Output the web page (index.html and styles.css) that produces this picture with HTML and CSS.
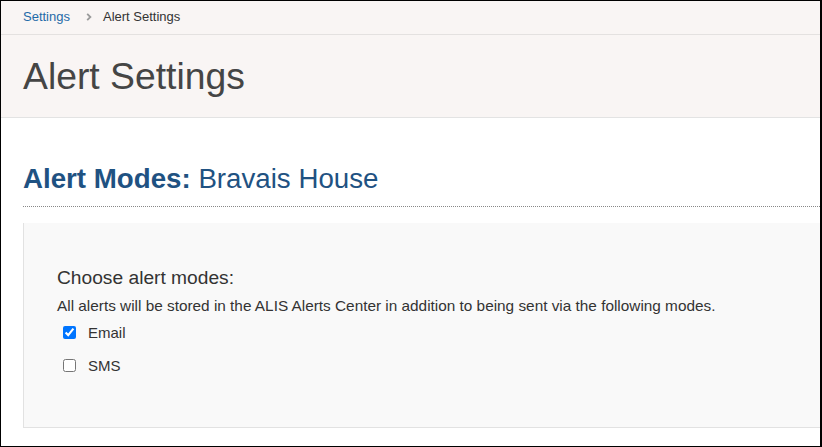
FILE: index.html
```html
<!DOCTYPE html>
<html lang="en">
<head>
<meta charset="utf-8">
<title>Alert Settings</title>
<link rel="stylesheet" href="styles.css">
</head>
<body>
<div class="frame">
  <nav class="crumbs">
    <a class="crumb-link" href="#">Settings</a>
    <svg class="crumb-sep" width="6" height="8" viewBox="0 0 6 8" aria-hidden="true"><path d="M1.2 0.8 L4.4 4 L1.2 7.2" fill="none" stroke="#9a9a9a" stroke-width="1.8"/></svg>
    <span class="crumb-current">Alert Settings</span>
  </nav>
  <header class="page-header">
    <h1 class="page-title">Alert Settings</h1>
  </header>
  <main class="content">
    <h2 class="section-title"><strong>Alert Modes:</strong> Bravais House</h2>
    <div class="panel">
      <h3 class="panel-title">Choose alert modes:</h3>
      <p class="panel-note">All alerts will be stored in the ALIS Alerts Center in addition to being sent via the following modes.</p>
      <label class="mode-row"><input type="checkbox" class="mode-check" checked><span>Email</span></label>
      <label class="mode-row"><input type="checkbox" class="mode-check"><span>SMS</span></label>
    </div>
  </main>
</div>
</body>
</html>
```
FILE: styles.css
```css
* { box-sizing: border-box; }
html, body { margin: 0; padding: 0; background: #fff; }
body { font-family: "Liberation Sans", Arial, sans-serif; color: #333; }

.frame {
  width: 822px;
  height: 447px;
  border-style: solid;
  border-color: #000;
  border-width: 1px 2px 1px 1px;
  overflow: hidden;
  background: #fff;
}

.crumbs {
  height: 34px;
  display: flex;
  align-items: center;
  padding: 0 0 2px 22px;
  background: #f9f5f4;
  border-bottom: 1px solid #e4e1e0;
  font-size: 13px;
}
.crumb-link { color: #1f6aa8; text-decoration: none; }
.crumb-sep { margin: 1px 11px 0 16px; }
.crumb-current { color: #333; }

.page-header {
  height: 83px;
  display: flex;
  align-items: center;
  padding: 0 0 0 22px;
  background: #f9f5f4;
  border-bottom: 1px solid #e3e3e3;
}
.page-title {
  margin: 0;
  font-size: 37.3px;
  font-weight: normal;
  color: #454545;
  line-height: 42px;
}

.content { padding: 45px 0 0 22px; }

.section-title {
  margin: 0;
  font-size: 27.7px;
  line-height: 31px;
  font-weight: normal;
  color: #1f5282;
  padding-bottom: 12px;
  border-bottom: 1px dotted #888;
}
.section-title strong { font-weight: bold; }

.panel {
  margin-top: 16px;
  width: 900px;
  background: #f9f9f9;
  border-left: 1px solid #e2e2e2;
  border-bottom: 1px solid #e2e2e2;
  padding: 44px 0 45px 33px;
}
.panel-title {
  margin: 0;
  font-size: 19.2px;
  line-height: 22px;
  font-weight: normal;
  color: #333;
}
.panel-note {
  margin: 8px 0 2px;
  font-size: 15.35px;
  line-height: 17px;
  color: #333;
}
.mode-row {
  height: 33px;
  display: flex;
  align-items: center;
  font-size: 15px;
  line-height: 17px;
  color: #333;
}
.mode-check {
  width: 13px;
  height: 13px;
  margin: 0 12px 0 6px;
}
```
